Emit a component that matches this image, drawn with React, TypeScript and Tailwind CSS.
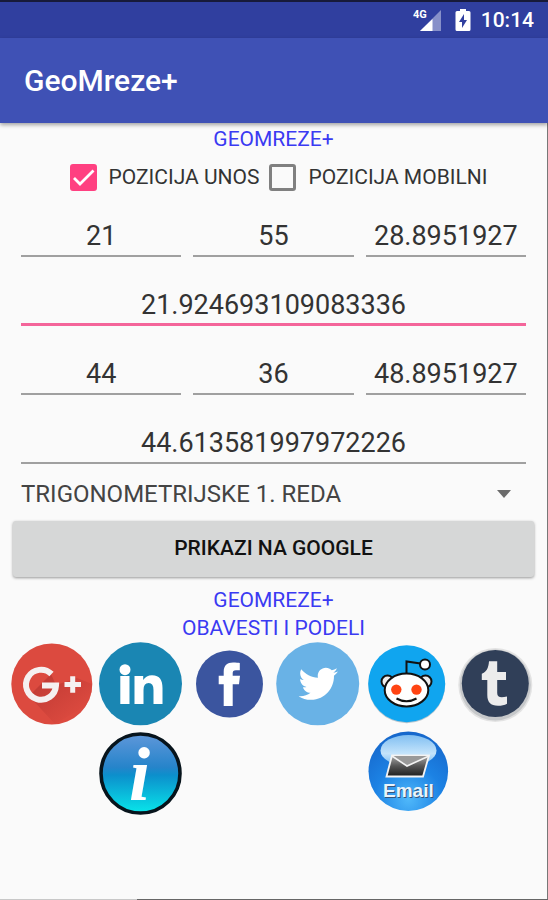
import { useState, type ReactNode } from "react";
import { FaTwitter } from "react-icons/fa";

function StatusBar() {
  return (
    <div className="flex h-[38px] items-center justify-end border-t-2 border-[#171a3a] bg-[#303f9f] pr-3.5 text-white">
      <svg className="h-6 w-[30px]" viewBox="0 0 30 24" aria-label="4G signal">
        <path d="M28 2V23H7Z" fill="#8790c9" />
        <path d="M19.500 11V23H7Z" fill="#fff" />
        <text x="0" y="10" fontFamily="Roboto, sans-serif" fontSize="11" fontWeight="700" fill="#fff">4G</text>
      </svg>
      <svg className="ml-3 h-6 w-4" viewBox="0 0 16 24" aria-label="Battery charging">
        <path d="M5 1h6v2h3q1.500 0 1.500 1.500v17q0 1.500-1.500 1.500H2Q.5 23 .5 21.500v-17Q.5 3 2 3h3Z" fill="#fff" />
        <path d="M9 6L4 14h3v6l5-8H9Z" fill="#303f9f" />
      </svg>
      <span className="ml-2.5 text-[21px] font-medium leading-6">10:14</span>
    </div>
  );
}

function Caption({ children }: { children: ReactNode }) {
  return <p className="text-center text-[21px] leading-7 text-[#3a3af2]">{children}</p>;
}

function Check({ label, initial }: { label: string; initial: boolean }) {
  const [on, setOn] = useState(initial);
  return (
    <label className="flex items-center gap-3 whitespace-nowrap text-[21px] leading-7 text-[#333]">
      <span className="grid shrink-0">
        <input
          type="checkbox"
          checked={on}
          onChange={(e) => setOn(e.target.checked)}
          className="col-start-1 row-start-1 size-[27px] appearance-none rounded-[3px] border-3 border-[#808080] checked:border-[#ff4081] checked:bg-[#ff4081]"
        />
        {on && (
          <svg className="pointer-events-none col-start-1 row-start-1 size-[27px]" viewBox="0 0 27 27" fill="none">
            <path d="M4 14l6 6L23.500 6.500" stroke="#fff" strokeWidth="2.800" />
          </svg>
        )}
      </span>
      {label}
    </label>
  );
}

function Field({ name, value, active = false }: { name: string; value: string; active?: boolean }) {
  return (
    <input
      aria-label={name}
      defaultValue={value}
      className={
        "h-[46px] w-full min-w-0 rounded-none bg-transparent pt-1.5 text-center text-[27px] text-[#333] outline-none " +
        (active ? "border-b-3 border-[#f4659a]" : "border-b-2 border-[#a0a0a0]")
      }
    />
  );
}

function Share({ label, className = "", children }: { label: string; className?: string; children: ReactNode }) {
  return (
    <button aria-label={label} className={"block w-full " + className}>
      <svg className="block h-auto w-full" viewBox="0 0 89 85">
        {children}
      </svg>
    </button>
  );
}

export default function App() {
  return (
    <div className="flex min-h-screen flex-col bg-[#fafafa] font-[Roboto,sans-serif]">
      <StatusBar />
      <header className="z-10 flex h-[85px] items-center bg-[#3f51b5] px-6 shadow-[0_2px_4px_rgba(0,0,0,0.35)]">
        <h1 className="text-[30px] font-medium text-white">GeoMreze+</h1>
      </header>

      <main className="flex-1 border-r border-[#777] pt-0.5">
        <Caption>GEOMREZE+</Caption>
        <div className="flex h-12 items-center justify-center gap-2.5 pl-2.5">
          <Check label="POZICIJA UNOS" initial={true} />
          <Check label="POZICIJA MOBILNI" initial={false} />
        </div>

        <div className="flex flex-col gap-[23px] px-[21px] pt-2.5">
          <div className="grid grid-cols-3 gap-3">
            <Field name="Stepeni duzine" value="21" />
            <Field name="Minuti duzine" value="55" />
            <Field name="Sekunde duzine" value="28.8951927" />
          </div>
          <Field name="Duzina" value="21.924693109083336" active />
          <div className="grid grid-cols-3 gap-3">
            <Field name="Stepeni sirine" value="44" />
            <Field name="Minuti sirine" value="36" />
            <Field name="Sekunde sirine" value="48.8951927" />
          </div>
          <Field name="Sirina" value="44.613581997972226" />
        </div>

        <div className="mt-2 grid items-center px-[21px]">
          <select
            aria-label="Vrsta"
            className="col-start-1 row-start-1 h-11 w-full appearance-none bg-transparent text-2xl text-[#444] outline-none"
          >
            <option>TRIGONOMETRIJSKE 1. REDA</option>
          </select>
          <svg className="pointer-events-none col-start-1 row-start-1 mr-3.5 h-2 w-4 justify-self-end" viewBox="0 0 16 8">
            <path d="M1 0h14L8 8Z" fill="#6b6b6b" />
          </svg>
        </div>

        <div className="px-[13px] pt-[5px]">
          <button className="h-14 w-full rounded-[3px] bg-[#d6d7d7] text-[21px] font-medium text-[#111] shadow-[0_1px_3px_rgba(0,0,0,0.4)]">
            PRIKAZI NA GOOGLE
          </button>
        </div>

        <div className="pt-[9px]">
          <Caption>GEOMREZE+</Caption>
          <Caption>OBAVESTI I PODELI</Caption>
        </div>

        <div className="grid grid-cols-6 gap-y-1 pl-[7px] pr-1.5">
          <Share label="Google+">
            <defs>
              <clipPath id="gclip"><circle cx="44.800" cy="42" r="40.500" /></clipPath>
              <linearGradient id="gshade" x1="0" y1="0" x2="1" y2="1">
                <stop offset=".2" stopColor="#b93631" />
                <stop offset=".8" stopColor="#dc4a3f" />
              </linearGradient>
            </defs>
            <circle cx="44.800" cy="42" r="40.500" fill="#dc4a3f" />
            <path d="M22 54L48 82L85 60V42L70 36L49 43L44 32Z" fill="url(#gshade)" opacity=".7" clipPath="url(#gclip)" />
            <path d="M44.500 32A15 15 0 1 0 49 43.500H35" fill="none" stroke="#f5f0f0" strokeWidth="6" />
            <path d="M57.500 42.500h16.500M65.700 34.200v16.500" stroke="#f5f0f0" strokeWidth="5" />
          </Share>
          <Share label="LinkedIn">
            <circle cx="44.500" cy="41.800" r="41.500" fill="#1a86b3" />
            <circle cx="29" cy="27.700" r="5.500" fill="#fff" />
            <path d="M24.300 34h9.200v28h-9.200ZM38.500 34h8.700v4q3-4.700 8.800-4.700C64 33.300 66.500 38.500 66.500 46v16h-9V48q0-7-4.800-7-5.200 0-5.200 7v14h-9Z" fill="#fff" />
          </Share>
          <Share label="Facebook">
            <circle cx="44.500" cy="42" r="33.500" fill="#3b559f" />
            <path d="M38.700 64V42.200h-5v-8.400h5v-4c0-6.300 3.500-9.300 9.300-9.300 3 0 5.500.2 6.800.5v7.300h-3.800c-2.700 0-3.300 1.200-3.300 3.200v2.300h7.300l-1 8.400h-6.300V64Z" fill="#fff" />
          </Share>
          <Share label="Twitter">
            <circle cx="43.700" cy="41.800" r="41.500" fill="#69b2e6" />
            <FaTwitter x="24.500" y="22" size="39.500" color="#fff" />
          </Share>
          <Share label="Reddit">
            <circle cx="43.700" cy="42.700" r="38.500" fill="#b7c6cf" />
            <circle cx="43.700" cy="41.800" r="38.500" fill="#10a5ef" />
            <g stroke="#111" strokeWidth="2">
              <circle cx="24.500" cy="39.500" r="6" fill="#eee" />
              <circle cx="62.500" cy="39.500" r="6" fill="#eee" />
              <path d="M43.500 31V19.500L57.500 21.500" fill="none" />
              <circle cx="62" cy="22.500" r="5" fill="#fff" />
              <ellipse cx="43.500" cy="48" rx="21.800" ry="16.500" fill="#fff" />
              <path d="M33.500 56.500q10 5.500 20 0" fill="none" />
            </g>
            <circle cx="33.300" cy="47.600" r="5.200" fill="#ff4413" />
            <circle cx="53.500" cy="47.600" r="5.200" fill="#ff4413" />
          </Share>
          <Share label="Tumblr">
            <circle cx="43.300" cy="43" r="37" fill="#e3e3e3" />
            <circle cx="43.300" cy="43" r="35.500" fill="#c6c8ca" />
            <circle cx="43.300" cy="41.500" r="33.500" fill="#303f58" />
            <path d="M37 19.200h8.200V30H54v8h-8.800v13c0 4.500 3.500 5 9.800 3.500v7.200c-2.500 1.500-5.500 2-9 2C38.500 63.700 35.300 60 35.300 53V38h-5.500v-6.300C34.500 30 36.500 26 37 19.200Z" fill="#ececec" />
          </Share>

          <Share label="Info" className="col-start-2">
            <defs>
              <linearGradient id="info" x1="0" y1="0" x2="0" y2="1">
                <stop offset="0" stopColor="#5f97da" />
                <stop offset=".42" stopColor="#2684ca" />
                <stop offset=".52" stopColor="#0c8fcc" />
                <stop offset="1" stopColor="#08e6ea" />
              </linearGradient>
            </defs>
            <circle cx="44.500" cy="42.500" r="39.500" fill="url(#info)" stroke="#07141c" strokeWidth="3.600" />
            <text x="33" y="68.500" fontFamily="Liberation Serif, serif" fontStyle="italic" fontWeight="700" fontSize="76" fill="#fff">i</text>
          </Share>
          <Share label="Email" className="col-start-5">
            <defs>
              <radialGradient id="mail" cx=".5" cy=".85" r=".85">
                <stop offset="0" stopColor="#4fb8fa" />
                <stop offset=".5" stopColor="#1c82e4" />
                <stop offset="1" stopColor="#1667cb" />
              </radialGradient>
              <linearGradient id="shine" x1="0" y1="0" x2="0" y2="1">
                <stop offset="0" stopColor="#8cc8f5" />
                <stop offset=".6" stopColor="#d7f0ff" />
                <stop offset="1" stopColor="#7cc0f5" />
              </linearGradient>
              <linearGradient id="paper" x1="0" y1="0" x2="0" y2="1">
                <stop offset="0" stopColor="#a8a8a8" />
                <stop offset=".5" stopColor="#555" />
                <stop offset="1" stopColor="#1d1d1d" />
              </linearGradient>
            </defs>
            <circle cx="45.300" cy="40.300" r="39.800" fill="url(#mail)" />
            <ellipse cx="45.500" cy="19.500" rx="28" ry="15.500" fill="url(#shine)" opacity=".9" />
            <path d="M29 24.500H66L60 45.500H23.500Z" fill="url(#paper)" stroke="#f3f3f3" strokeWidth="1.800" />
            <path d="M29 25L44 35L66 25" fill="#999" stroke="#f3f3f3" strokeWidth="1.600" />
            <text x="21" y="66.500" fontFamily="Liberation Sans, sans-serif" fontWeight="700" fontSize="19" fill="#35557a">Email</text>
            <text x="20" y="65.500" fontFamily="Liberation Sans, sans-serif" fontWeight="700" fontSize="19" fill="#e9f3fb">Email</text>
          </Share>
        </div>
      </main>
      <div className="flex h-px">
        <div className="w-1/4 bg-[#c8c8c8]" />
        <div className="flex-1 bg-[#666]" />
      </div>
    </div>
  );
}
